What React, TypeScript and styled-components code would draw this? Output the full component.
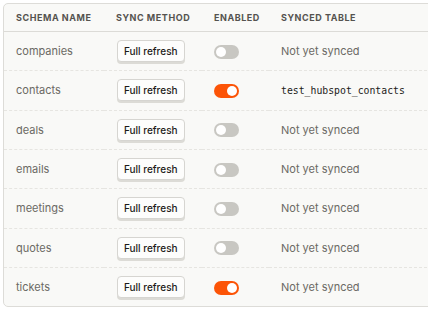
import React from 'react';
import styled, { createGlobalStyle } from 'styled-components';

const GlobalStyle = createGlobalStyle`
  body {
    margin: 0;
    background: #ffffff;
    font-family: Inter, "Noto Sans", sans-serif;
  }
`;

const Page = styled.div`
  padding: 3px 0 0 3px;
  width: 450px;
`;

const Card = styled.div`
  background: #f9f9f7;
  border: 1px solid #dddcd8;
  border-radius: 5px;
  overflow: hidden;
`;

const Table = styled.table`
  border-collapse: collapse;
  table-layout: fixed;
  width: 100%;
`;

const Th = styled.th<{ $w?: number }>`
  width: ${p => (p.$w ? `${p.$w}px` : 'auto')};
  text-align: left;
  padding: 0 0 0 12px;
  height: 27px;
  font-size: 9px;
  font-weight: 700;
  letter-spacing: 0.55px;
  color: #55534f;
  border-bottom: 1px solid #dcdbd7;
  white-space: nowrap;
`;

const Tr = styled.tr`
  & + & td {
    border-top: 1px dashed #e6e5e1;
  }
`;

const Td = styled.td`
  padding: 0 0 0 12px;
  height: 38.33px;
  font-size: 11px;
  color: #6b6964;
  white-space: nowrap;
`;

const Button = styled.button`
  font-family: Inter, "Noto Sans", sans-serif;
  font-size: 10px;
  font-weight: 500;
  color: #1c1b19;
  background: #fdfdfc;
  border: 1px solid #d6d5d1;
  border-radius: 4px;
  box-shadow: 0 2px 0 #dcdbd6;
  height: 22px;
  padding: 0 6px;
  margin-left: 1px;
`;

const Toggle = styled.span<{ $on: boolean }>`
  display: inline-block;
  position: relative;
  width: 25px;
  height: 14px;
  border-radius: 7px;
  background: ${p => (p.$on ? '#fc5407' : '#c8c7c2')};
  vertical-align: middle;
  &::after {
    content: '';
    position: absolute;
    top: 2px;
    left: ${p => (p.$on ? '13px' : '2px')};
    width: 10px;
    height: 10px;
    border-radius: 50%;
    background: #ffffff;
  }
`;

const Mono = styled.span`
  font-family: "DejaVu Sans Mono", monospace;
  font-size: 9.8px;
  color: #1c1b19;
`;

const rows = [
  { name: 'companies', on: false, table: '' },
  { name: 'contacts', on: true, table: 'test_hubspot_contacts' },
  { name: 'deals', on: false, table: '' },
  { name: 'emails', on: false, table: '' },
  { name: 'meetings', on: false, table: '' },
  { name: 'quotes', on: false, table: '' },
  { name: 'tickets', on: true, table: '' },
];

export default function App() {
  return (
    <Page>
      <GlobalStyle />
      <Card>
        <Table>
          <thead>
            <tr>
              <Th $w={88}>SCHEMA NAME</Th>
              <Th $w={86}>SYNC METHOD</Th>
              <Th $w={55}>ENABLED</Th>
              <Th>SYNCED TABLE</Th>
            </tr>
          </thead>
          <tbody>
            {rows.map(r => (
              <Tr key={r.name}>
                <Td>{r.name}</Td>
                <Td><Button>Full refresh</Button></Td>
                <Td><Toggle $on={r.on} /></Td>
                <Td>{r.table ? <Mono>{r.table}</Mono> : 'Not yet synced'}</Td>
              </Tr>
            ))}
          </tbody>
        </Table>
      </Card>
    </Page>
  );
}
